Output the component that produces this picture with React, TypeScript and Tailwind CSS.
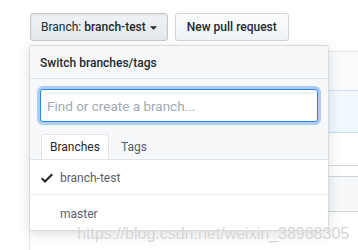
import { FaCaretDown } from 'react-icons/fa'

const branches = [
  { name: 'branch-test', selected: true },
  { name: 'master', selected: false },
]

const CheckIcon = () => (
  <svg width="12" height="16" viewBox="0 0 12 16" className="fill-[#24292e]">
    <path fillRule="evenodd" d="M12 5l-8 8-4-4 1.5-1.5L4 10l6.5-6.5L12 5z" />
  </svg>
)

const App = () => {
  return (
    <div className="relative w-[358px] h-[250px] bg-white overflow-hidden font-['Roboto','Liberation_Sans',sans-serif] text-[#24292e]">
      {/* toolbar */}
      <div className="flex items-center gap-[7px] pt-[13px] pl-[30px]">
        <button className="h-[28px] pl-[10px] pr-[8px] flex items-center gap-[2px] text-[12px] rounded-[3px] border border-[#c5c9cd] bg-gradient-to-b from-[#eff3f6] to-[#e4e8ec] shadow-[inset_0_1px_2px_rgba(27,31,35,0.1)]">
          <span>
            Branch: <span className="font-medium">branch-test</span>
          </span>
          <FaCaretDown className="text-[11px]" />
        </button>
        <button className="h-[28px] px-[11px] text-[12px] font-medium rounded-[3px] border border-[#d1d5da] bg-gradient-to-b from-[#fafbfc] to-[#eff3f6]">
          New pull request
        </button>
      </div>

      {/* page box behind the menu */}
      <div className="ml-[29px] mt-[10px] border-l border-t border-[#e1e4e8] h-[300px] flex flex-col">
        <div className="h-[38px] bg-[#fafbfc]" />
        <div className="h-[43px] bg-[#f1f8ff] border-y border-[#c8e1ff]" />
        <div className="h-[33px] border-b border-[#d1d5da]" />
        <div className="h-[11px] border-b border-[#d1d5da]" />
        <div className="h-[35px] bg-[#f6f8fa] border-b border-[#d1d5da]" />
      </div>

      {/* select menu */}
      <div className="absolute left-[29px] top-[45px] w-[300px] bg-white border border-[#d8dbde] rounded-[3px] shadow-[0_3px_12px_rgba(27,31,35,0.15)] overflow-hidden">
        <div className="h-[33px] pt-[2px] px-[10px] flex items-center bg-[#f6f8fa] border-b border-[#e1e4e8] text-[12px] font-medium">
          Switch branches/tags
        </div>
        <div className="bg-[#f6f8fa] border-b border-[#e1e4e8]">
          <div className="px-[10px] pt-[10px] pb-[12px]">
            <input
              autoFocus
              placeholder="Find or create a branch..."
              className="block w-full h-[33px] px-[6px] text-[13.5px] rounded-[3px] bg-white border border-[#2188ff] outline-none shadow-[0_0_0_3px_rgba(3,102,214,0.3)] placeholder:text-[#a3aab1]"
            />
          </div>
          <div className="flex px-[11px] text-[12px]">
            <div className="h-[25px] px-[8px] flex items-center bg-white border border-b-0 border-[#e1e4e8] rounded-t-[3px] -mb-px">
              Branches
            </div>
            <div className="h-[25px] px-[12px] flex items-center text-[#586069]">Tags</div>
          </div>
        </div>
        {branches.map((b) => (
          <div
            key={b.name}
            className="h-[35px] pt-[2px] flex items-center gap-[7px] pl-[11px] border-b border-[#eaecef] last:border-b-0 text-[12px] text-[#586069]"
          >
            <span className="w-[12px] flex">{b.selected && <CheckIcon />}</span>
            <span>{b.name}</span>
          </div>
        ))}
      </div>

      {/* watermark */}
      <div className="absolute left-[77px] top-[222px] text-[16px] text-[#d4d4d4] [text-shadow:0_0_1px_#fff] font-['Liberation_Sans',sans-serif]">
        https://blog.csdn.net/weixin_38968305
      </div>
    </div>
  )
}

export default App
